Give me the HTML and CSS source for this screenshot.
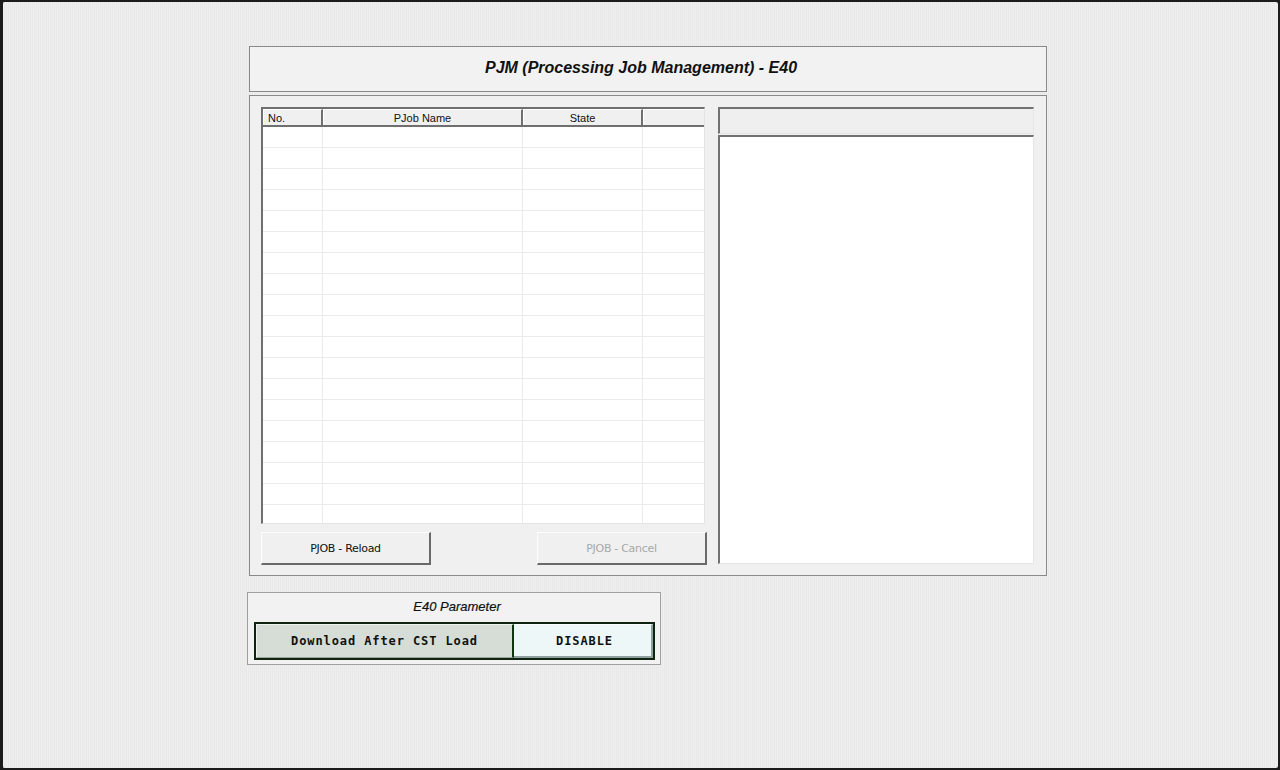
FILE: index.html
```html
<!DOCTYPE html>
<html>
<head>
<meta charset="utf-8">
<link rel="stylesheet" href="styles.css">
</head>
<body>
<div class="screen">
  <div class="main">
    <div class="title-box">PJM (Processing Job Management) - E40</div>
    <div class="panel">
      <div class="left-col">
        <div class="grid">
          <div class="grid-head">
            <div class="hc c1 left">No.</div>
            <div class="hc c2">PJob Name</div>
            <div class="hc c3">State</div>
            <div class="hc c4"></div>
          </div>
          <div class="grid-body">
            <div class="row"><div class="bc c1"></div><div class="bc c2"></div><div class="bc c3"></div><div class="bc c4"></div></div>
            <div class="row"><div class="bc c1"></div><div class="bc c2"></div><div class="bc c3"></div><div class="bc c4"></div></div>
            <div class="row"><div class="bc c1"></div><div class="bc c2"></div><div class="bc c3"></div><div class="bc c4"></div></div>
            <div class="row"><div class="bc c1"></div><div class="bc c2"></div><div class="bc c3"></div><div class="bc c4"></div></div>
            <div class="row"><div class="bc c1"></div><div class="bc c2"></div><div class="bc c3"></div><div class="bc c4"></div></div>
            <div class="row"><div class="bc c1"></div><div class="bc c2"></div><div class="bc c3"></div><div class="bc c4"></div></div>
            <div class="row"><div class="bc c1"></div><div class="bc c2"></div><div class="bc c3"></div><div class="bc c4"></div></div>
            <div class="row"><div class="bc c1"></div><div class="bc c2"></div><div class="bc c3"></div><div class="bc c4"></div></div>
            <div class="row"><div class="bc c1"></div><div class="bc c2"></div><div class="bc c3"></div><div class="bc c4"></div></div>
            <div class="row"><div class="bc c1"></div><div class="bc c2"></div><div class="bc c3"></div><div class="bc c4"></div></div>
            <div class="row"><div class="bc c1"></div><div class="bc c2"></div><div class="bc c3"></div><div class="bc c4"></div></div>
            <div class="row"><div class="bc c1"></div><div class="bc c2"></div><div class="bc c3"></div><div class="bc c4"></div></div>
            <div class="row"><div class="bc c1"></div><div class="bc c2"></div><div class="bc c3"></div><div class="bc c4"></div></div>
            <div class="row"><div class="bc c1"></div><div class="bc c2"></div><div class="bc c3"></div><div class="bc c4"></div></div>
            <div class="row"><div class="bc c1"></div><div class="bc c2"></div><div class="bc c3"></div><div class="bc c4"></div></div>
            <div class="row"><div class="bc c1"></div><div class="bc c2"></div><div class="bc c3"></div><div class="bc c4"></div></div>
            <div class="row"><div class="bc c1"></div><div class="bc c2"></div><div class="bc c3"></div><div class="bc c4"></div></div>
            <div class="row"><div class="bc c1"></div><div class="bc c2"></div><div class="bc c3"></div><div class="bc c4"></div></div>
            <div class="row"><div class="bc c1"></div><div class="bc c2"></div><div class="bc c3"></div><div class="bc c4"></div></div>
          </div>
        </div>
        <div class="buttons">
          <button class="btn">PJOB - Reload</button>
          <button class="btn disabled">PJOB - Cancel</button>
        </div>
      </div>
      <div class="right-col">
        <div class="info-head"></div>
        <div class="info-body"></div>
      </div>
    </div>
    <div class="param-box">
      <div class="param-title">E40 Parameter</div>
      <div class="param-row">
        <div class="param-name">Download After CST Load</div>
        <div class="param-value">DISABLE</div>
      </div>
    </div>
  </div>
</div>
</body>
</html>
```
FILE: styles.css
```css
* { box-sizing: border-box; }
html, body { margin: 0; padding: 0; }
body {
  width: 1280px;
  height: 770px;
  overflow: hidden;
  background: #1c1c1c;
  font-family: "Liberation Sans", Arial, sans-serif;
}
.screen {
  width: 1280px;
  height: 770px;
  border: 2px solid #1c1c1c;
  border-left-width: 3px;
  border-radius: 4px;
  background-color: #e9e9e9;
  background-image: repeating-linear-gradient(90deg, rgba(255,255,255,0.25) 0 1px, transparent 1px 2px);
  padding: 44px 0 0 246px;
}
.main {
  width: 798px;
  display: flex;
  flex-direction: column;
}
.title-box {
  height: 46px;
  border: 1px solid #8a8a8a;
  background: #f2f2f2;
  display: flex;
  align-items: center;
  justify-content: center;
  font-weight: bold;
  font-style: italic;
  font-size: 16px;
  color: #111;
  padding: 0 14px 2px 0;
}
.panel {
  margin-top: 3px;
  height: 481px;
  border: 1px solid #8a8a8a;
  background: #f0f0f0;
  display: flex;
  padding: 11px 0 0 11px;
  gap: 11px;
}
.left-col {
  width: 446px;
  display: flex;
  flex-direction: column;
}
.grid {
  width: 444px;
  height: 417px;
  border-top: 2px solid #6f6f6f;
  border-left: 2px solid #6f6f6f;
  border-right: 1px solid #e4e4e4;
  border-bottom: 1px solid #e4e4e4;
  background: #fff;
  overflow: hidden;
}
.grid-head {
  display: flex;
  height: 18px;
  background: #f0f0f0;
  border-bottom: 2px solid #6f6f6f;
}
.hc {
  height: 16px;
  font-size: 11px;
  line-height: 16px;
  color: #111;
  text-align: center;
  border-right: 2px solid #6f6f6f;
  border-left: 1px solid #fff;
  border-top: 1px solid #fff;
}
.hc.left { text-align: left; padding-left: 4px; }
.hc.c4 { border-right: none; }
.c1 { width: 60px; }
.c2 { width: 200px; }
.c3 { width: 120px; }
.c4 { width: 61px; }
.row {
  display: flex;
  height: 21px;
  border-bottom: 1px solid #ebebeb;
}
.bc {
  height: 20px;
  border-right: 1px solid #ebebeb;
}
.bc.c4 { border-right: none; }
.buttons {
  margin-top: 8px;
  display: flex;
  justify-content: space-between;
  width: 446px;
}
.btn {
  width: 170px;
  height: 33px;
  background: #f0f0f0;
  border-top: 1px solid #fdfdfd;
  border-left: 1px solid #fdfdfd;
  border-right: 2px solid #6a6a6a;
  border-bottom: 2px solid #6a6a6a;
  font-family: "DejaVu Sans", "Liberation Sans", sans-serif;
  font-size: 11px;
  color: #111;
  padding: 0;
  letter-spacing: -0.3px;
}
.btn.disabled { color: #a8a8a8; }
.right-col {
  width: 316px;
  display: flex;
  flex-direction: column;
  gap: 1px;
}
.info-head {
  height: 27px;
  background: #efefef;
  border-top: 2px solid #727272;
  border-left: 2px solid #727272;
  border-right: 1px solid #e6e6e6;
  border-bottom: 1px solid #e6e6e6;
}
.info-body {
  height: 429px;
  background: #fff;
  border-top: 2px solid #727272;
  border-left: 2px solid #727272;
  border-right: 1px solid #e6e6e6;
  border-bottom: 1px solid #e6e6e6;
}
.param-box {
  margin-top: 16px;
  margin-left: -2px;
  width: 414px;
  height: 73px;
  border: 1px solid #a0a0a0;
  background: #f2f2f2;
  padding: 0 0 0 6px;
  display: flex;
  flex-direction: column;
}
.param-title {
  height: 29px;
  padding-top: 6px;
  text-align: center;
  font-style: italic;
  font-size: 13px;
  color: #111;
  padding-right: 0;
  -webkit-text-stroke: 0.2px #111;
}
.param-row {
  width: 401px;
  height: 38px;
  border: 2px solid #0f2410;
  display: flex;
}
.param-name {
  width: 258px;
  background: #d5ddd6;
  border-right: 2px solid #0f3512;
  border-top: 1px solid #eef2ee;
  border-left: 1px solid #eef2ee;
  border-bottom: 1px solid #9aa69b;
  display: flex;
  align-items: center;
  justify-content: center;
  font-family: "DejaVu Sans Mono", "Liberation Mono", monospace;
  font-weight: bold;
  font-size: 12px;
  letter-spacing: 0.9px;
  color: #111;
}
.param-value {
  flex: 1;
  background: #eef7f7;
  border-right: 2px solid #8fa0a0;
  border-bottom: 2px solid #8fa0a0;
  border-top: 1px solid #fff;
  display: flex;
  align-items: center;
  justify-content: center;
  padding-left: 4px;
  font-family: "DejaVu Sans Mono", "Liberation Mono", monospace;
  font-weight: bold;
  font-size: 12px;
  letter-spacing: 0.9px;
  color: #111;
}
```
